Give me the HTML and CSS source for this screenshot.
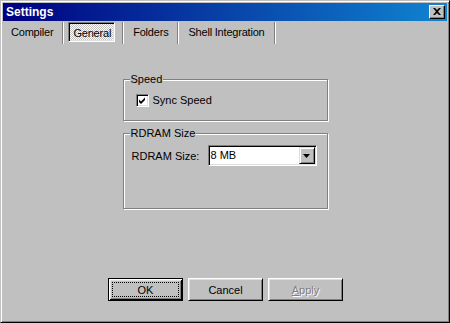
FILE: index.html
```html
<!DOCTYPE html>
<html>
<head>
<meta charset="utf-8">
<title>Settings</title>
<link rel="stylesheet" href="styles.css">
</head>
<body>
<div class="window">
  <div class="titlebar">
    <span class="title">Settings</span>
    <span class="close-btn">
      <svg width="8" height="7" viewBox="0 0 8 7"><path d="M0 0h2l2 2 2-2h2L5 3.5 8 7H6L4 5 2 7H0l3-3.5z" fill="#000"/></svg>
    </span>
  </div>
  <div class="tabs">
    <span class="tab">Compiler</span>
    <span class="sep"></span>
    <span class="tab active">General</span>
    <span class="sep"></span>
    <span class="tab">Folders</span>
    <span class="sep"></span>
    <span class="tab">Shell Integration</span>
    <span class="sep"></span>
  </div>
  <div class="content">
    <div class="group group-speed">
      <span class="group-label">Speed</span>
      <label class="check-row">
        <span class="checkbox">
          <svg width="9" height="9" viewBox="0 0 9 9"><path d="M1 3.5L3 5.5 7 1.5V4L3 8 1 6z" fill="#000"/></svg>
        </span>
        <span>Sync Speed</span>
      </label>
    </div>
    <div class="group group-rdram">
      <span class="group-label">RDRAM Size</span>
      <div class="field-row">
        <span class="field-label">RDRAM Size:</span>
        <div class="combo">
          <span class="combo-text">8 MB</span>
          <span class="combo-btn">
            <svg width="7" height="4" viewBox="0 0 7 4"><path d="M0 0h7L3.5 4z" fill="#000"/></svg>
          </span>
        </div>
      </div>
    </div>
  </div>
  <div class="buttons">
    <button class="btn default"><span class="focus">OK</span></button>
    <button class="btn">Cancel</button>
    <button class="btn disabled"><u>A</u>pply</button>
  </div>
</div>
</body>
</html>
```

FILE: styles.css
```css
html, body {
  margin: 0;
  padding: 0;
  background: #c0c0c0;
}

.window {
  width: 450px;
  height: 323px;
  box-sizing: border-box;
  background: #c0c0c0;
  border: 1px solid;
  border-color: #c0c0c0 #000 #000 #c0c0c0;
  box-shadow: inset 1px 1px 0 #fff, inset -1px -1px 0 #808080;
  padding: 2px;
  display: flex;
  flex-direction: column;
  font-family: "Liberation Sans", Arial, sans-serif;
  font-size: 11px;
  color: #000;
}

.titlebar {
  height: 18px;
  background: linear-gradient(to right, #000080, #1084d0);
  display: flex;
  align-items: center;
  justify-content: space-between;
  padding: 0 2px 0 3px;
}

.title {
  color: #fff;
  font-weight: bold;
  font-size: 12px;
  line-height: 18px;
}

.close-btn {
  width: 16px;
  height: 14px;
  box-sizing: border-box;
  background: #c0c0c0;
  border: 1px solid;
  border-color: #fff #000 #000 #fff;
  box-shadow: inset -1px -1px 0 #808080;
  display: flex;
  align-items: center;
  justify-content: center;
  padding: 0 1px 1px 0;
}

.close-btn svg {
  display: block;
}

.tabs {
  display: flex;
  align-items: flex-start;
  margin-top: 1px;
  padding-left: 3px;
  height: 22px;
  letter-spacing: -0.2px;
}

.tab {
  height: 20px;
  line-height: 20px;
  padding: 0 5px;
  box-sizing: border-box;
  white-space: nowrap;
}

.tab.active {
  border: 1px solid;
  border-color: #808080 #fff #fff #808080;
  box-shadow: inset 1px 1px 0 #000, inset -1px -1px 0 #dfdfdf;
  background: repeating-conic-gradient(#fff 0 25%, #c0c0c0 0 50%) 0 0 / 2px 2px;
  line-height: 19px;
  padding: 1px 3px 0 4px;
  margin: 0 3px 0 0;
}

.sep {
  width: 1px;
  height: 22px;
  background: #808080;
  border-right: 1px solid #fff;
  margin: 0 4px 0 4px;
}

.content {
  display: flex;
  flex-direction: column;
  align-items: center;
  padding-top: 35px;
}

.group {
  position: relative;
  width: 205px;
  box-sizing: border-box;
  border: 1px solid #808080;
  box-shadow: inset 1px 1px 0 #fff, 1px 1px 0 #fff;
}

.group-label {
  position: absolute;
  top: -7px;
  left: 6px;
  padding: 0 1px;
  background: #c0c0c0;
  line-height: 13px;
}

.group-speed {
  height: 42px;
  padding: 14px 0 0 12px;
}

.check-row {
  display: flex;
  align-items: center;
  gap: 4px;
  line-height: 13px;
}

.checkbox {
  width: 13px;
  height: 13px;
  box-sizing: border-box;
  background: #fff;
  border: 1px solid;
  border-color: #808080 #fff #fff #808080;
  box-shadow: inset 1px 1px 0 #000, inset -1px -1px 0 #dfdfdf;
  display: flex;
  align-items: center;
  justify-content: center;
}

.checkbox svg {
  display: block;
}

.group-rdram {
  margin-top: 12px;
  height: 76px;
  padding: 11px 0 0 8px;
}

.field-row {
  display: flex;
  align-items: center;
  gap: 12px;
}

.field-label {
  width: 64px;
  white-space: nowrap;
}

.combo {
  width: 109px;
  height: 21px;
  box-sizing: border-box;
  background: #fff;
  border: 1px solid;
  border-color: #808080 #fff #fff #808080;
  box-shadow: inset 1px 1px 0 #000, inset -1px -1px 0 #dfdfdf;
  display: flex;
  align-items: center;
  justify-content: space-between;
  padding: 1px 1px 1px 2px;
}

.combo-text {
  line-height: 13px;
}

.combo-btn {
  width: 16px;
  height: 17px;
  box-sizing: border-box;
  background: #c0c0c0;
  border: 1px solid;
  border-color: #dfdfdf #000 #000 #dfdfdf;
  box-shadow: inset 1px 1px 0 #fff, inset -1px -1px 0 #808080;
  display: flex;
  align-items: center;
  justify-content: center;
}

.combo-btn svg {
  display: block;
}

.buttons {
  display: flex;
  justify-content: center;
  gap: 5px;
  margin-top: 69px;
  padding-left: 1px;
}

.btn {
  width: 75px;
  height: 23px;
  box-sizing: border-box;
  background: #c0c0c0;
  border: 1px solid;
  border-color: #fff #000 #000 #fff;
  box-shadow: inset 1px 1px 0 #dfdfdf, inset -1px -1px 0 #808080;
  font-family: "Liberation Sans", Arial, sans-serif;
  font-size: 11px;
  color: #000;
  padding: 0;
  margin: 0;
  display: flex;
  align-items: center;
  justify-content: center;
}

.btn.default {
  border: 1px solid #000;
  box-shadow: inset 1px 1px 0 #fff, inset -1px -1px 0 #000, inset 2px 2px 0 #dfdfdf, inset -2px -2px 0 #808080;
  padding: 3px;
}

.focus {
  flex: 1;
  align-self: stretch;
  border: 1px dotted #000;
  display: flex;
  align-items: center;
  justify-content: center;
}

.btn.disabled {
  color: #808080;
  text-shadow: 1px 1px 0 #fff;
}
```
